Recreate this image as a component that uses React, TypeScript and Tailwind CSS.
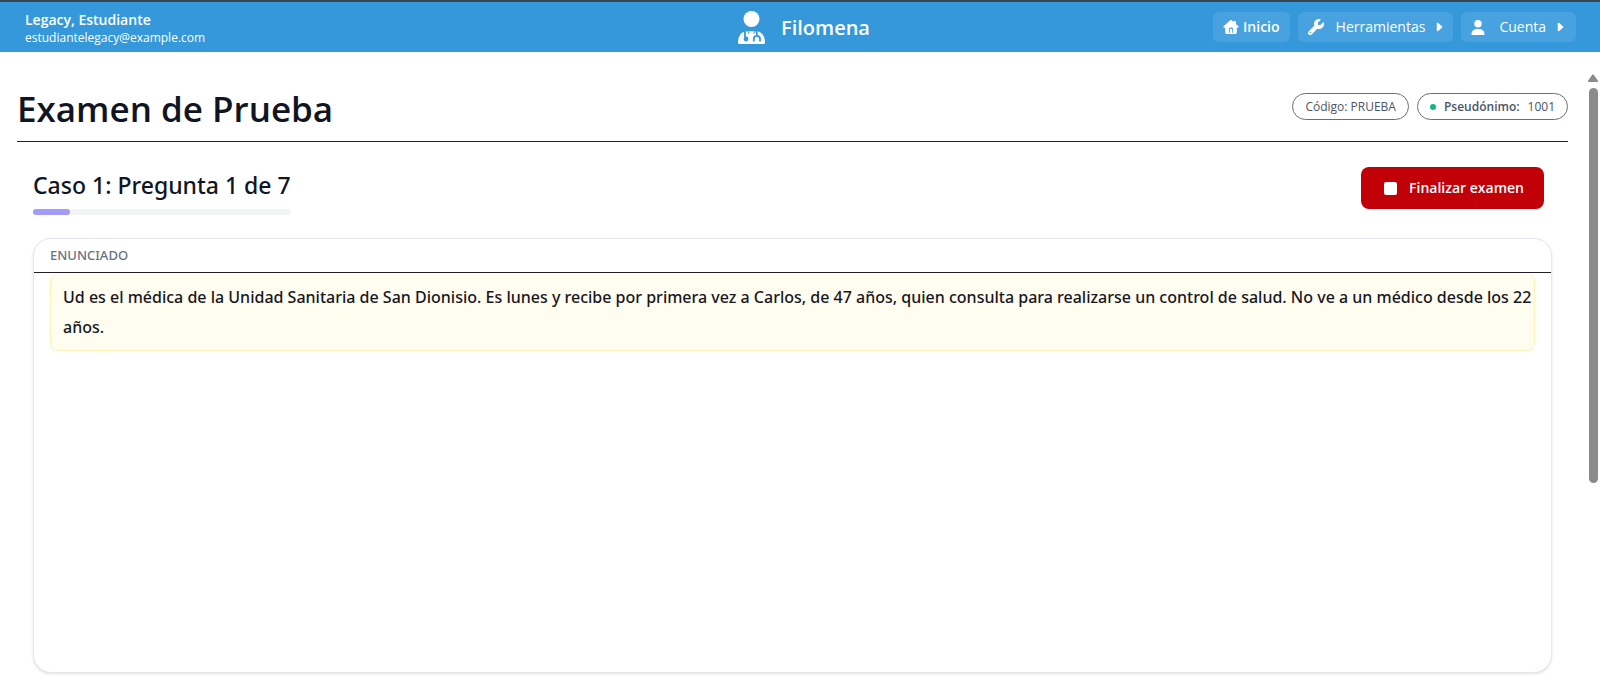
import { BsCaretRightFill } from "react-icons/bs";
import { FaUser, FaWrench } from "react-icons/fa6";

const CASE_COUNT = 7;
const CURRENT = 1;

function DoctorIcon() {
  return (
    <svg viewBox="0 0 27 33" className="h-[33px] w-[27px]" aria-hidden="true">
      <circle cx="13.5" cy="8" r="8" fill="#fff" />
      <path d="M0 31.5C0 25 3.5 20.6 8 20.2h11c4.5.4 8 4.8 8 11.3 0 .9-.6 1.5-1.5 1.5h-24C.6 33 0 32.4 0 31.5z" fill="#fff" />
      <g fill="none" stroke="#3498db" strokeWidth="1.8">
        <path d="M7 19.500v6.500M18.800 19.500v5M15.800 30.500v-2.500c0-4.300 6.200-4.300 6.200 0v2.500" />
      </g>
      <circle cx="8" cy="28" r="2.4" fill="#3498db" />
      <path d="M9.300 19.500l1.800 3.300M17 19.500l-1.200 3.300" stroke="#3498db" strokeWidth="1" />
    </svg>
  );
}

function HouseIcon() {
  return (
    <svg viewBox="0 0 16 16" className="size-4 fill-white" aria-hidden="true">
      <path
        fillRule="evenodd"
        d="M7.2 1.3a1.2 1.2 0 0 1 1.6 0l1.9 1.7V2h2.200v3l2.300 2.100c.7.700.4 1.700-.6 1.700h-.8v4.700c0 .9-.6 1.500-1.500 1.500H3.700c-.9 0-1.500-.6-1.500-1.500V8.800h-.8c-1 0-1.300-1-.6-1.700zM5.800 13.700h1v-3c0-1.300 2.400-1.300 2.400 0v3h1v-3.200c0-2.600-4.400-2.600-4.400 0z"
      />
    </svg>
  );
}

function Header() {
  return (
    <header className="grid h-13 grid-cols-[1fr_auto_1fr] items-center border-t-2 border-[#36454f] bg-[#3498db] px-6 text-white">
      <div className="flex flex-col pt-0.5 pl-px">
        <span className="text-sm leading-5 font-semibold">Legacy, Estudiante</span>
        <span className="text-xs leading-4">estudiantelegacy@example.com</span>
      </div>

      <a href="#" className="flex items-center gap-4 pl-2">
        <DoctorIcon />
        <span className="pt-0.5 text-xl font-semibold">Filomena</span>
      </a>

      <nav className="flex items-center justify-end gap-2">
        <a href="#" className="flex h-[30px] items-center gap-1 rounded-md bg-white/10 px-2.5 text-sm font-semibold">
          <HouseIcon />
          Inicio
        </a>
        <button type="button" className="flex h-[30px] items-center gap-2 rounded-md bg-white/10 pr-2 pl-2.5 text-sm">
          <FaWrench className="mr-1 size-4" />
          Herramientas
          <BsCaretRightFill className="size-3" />
        </button>
        <button type="button" className="flex h-[30px] items-center gap-2 rounded-md bg-white/10 pr-2.5 pl-2.5 text-sm">
          <FaUser className="mr-1.5 h-[15px] w-3.5" />
          Cuenta
          <BsCaretRightFill className="size-3" />
        </button>
      </nav>
    </header>
  );
}

function ExamHeading() {
  return (
    <div className="flex items-start justify-between border-b border-[#1f2024] pt-8 pb-2">
      <h1 className="text-[35px] leading-[49px] font-semibold text-[#101524]">Examen de Prueba</h1>
      <div className="flex items-center gap-2 pt-[9px] text-xs text-[#4a5565]">
        <span className="flex h-[27px] items-center rounded-full border border-[#6b6e75] px-3">Código: PRUEBA</span>
        <span className="flex h-[27px] items-center rounded-full border border-[#6b6e75] px-3">
          <span className="mr-2 size-1.5 rounded-full bg-[#10b981]" />
          <span className="mr-2 font-semibold">Pseudónimo:</span>
          1001
        </span>
      </div>
    </div>
  );
}

function CaseHeading() {
  return (
    <div className="flex items-start justify-between pr-2">
      <div>
        <h2 className="font-['Noto_Sans',sans-serif] text-[23px] leading-9 font-medium text-[#101524]">
          Caso {CURRENT}: Pregunta {CURRENT} de {CASE_COUNT}
        </h2>
        <div className="mt-1.5 h-1.5 rounded-full bg-[#f3f4f6]">
          <div className="h-1.5 rounded-full bg-[#a29bfb]" style={{ width: `${(CURRENT / CASE_COUNT) * 100}%` }} />
        </div>
      </div>
      <button
        type="button"
        className="flex h-[42px] items-center gap-3 rounded-lg bg-[#c10007] pr-5 pl-[23px] text-sm font-semibold text-white"
      >
        <span className="size-[13px] rounded-xs bg-white" />
        Finalizar examen
      </button>
    </div>
  );
}

function Statement() {
  return (
    <section className="min-h-[435px] rounded-[18px] border border-gray-200 bg-white shadow-sm">
      <h3 className="border-b border-[#1f2024] px-4 font-['Noto_Sans',sans-serif] text-[13px] leading-[33px] font-medium text-gray-500">
        ENUNCIADO
      </h3>
      <div className="mx-4 rounded-lg border border-t-0 border-[#fdf3b8] bg-[#fffcf0] pt-[9px] pb-2 pl-3">
        <p className="font-['Noto_Sans',sans-serif] text-base leading-[30px] font-medium text-[#17181f]">
          Ud es el médica de la Unidad Sanitaria de San Dionisio. Es lunes y recibe por primera vez a Carlos, de 47 años,
          quien consulta para realizarse un control de salud. No ve a un médico desde los 22 años.
        </p>
      </div>
    </section>
  );
}

function Scrollbar() {
  return (
    <div className="flex w-3.5 flex-col items-center pt-5" aria-hidden="true">
      <svg viewBox="0 0 10 8" className="mt-0.5 h-2 w-2.5 fill-[#8b8b8b]">
        <path d="M4.2.8a1 1 0 0 1 1.6 0l4 5.6A1 1 0 0 1 9 8H1A1 1 0 0 1 .2 6.4z" />
      </svg>
      <div className="mt-1.5 h-[395px] w-[9px] rounded-full bg-[#8b8b8b]" />
    </div>
  );
}

export default function App() {
  return (
    <div className="min-h-screen bg-white font-['Open_Sans','Noto_Sans',sans-serif]">
      <Header />
      <div className="flex">
        <main className="min-w-0 flex-1 pr-[18px] pl-[17px]">
          <ExamHeading />
          <div className="flex flex-col gap-[23px] px-4 pt-[25px]">
            <CaseHeading />
            <Statement />
          </div>
        </main>
        <Scrollbar />
      </div>
    </div>
  );
}
